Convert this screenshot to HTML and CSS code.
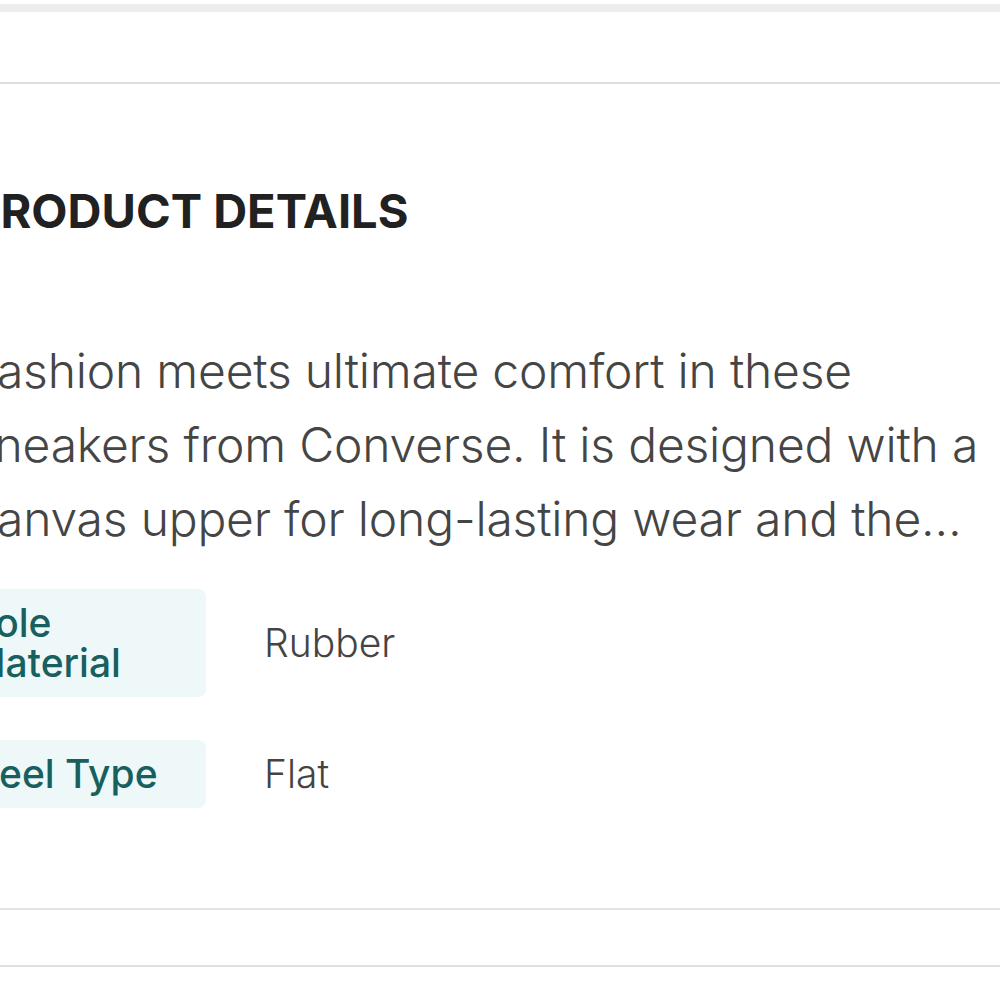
FILE: index.html
```html
<!DOCTYPE html>
<html lang="en">
<head>
<meta charset="utf-8">
<title>Product Details</title>
<link rel="stylesheet" href="styles.css">
</head>
<body>
<div class="page">
  <div class="top-band"></div>
  <div class="spacer-section"></div>
  <section class="details">
    <h2 class="details-title">PRODUCT DETAILS</h2>
    <p class="details-desc">Fashion meets ultimate comfort in these sneakers from Converse. It is designed with a canvas upper for long-lasting wear and the rubber sole provides durable traction.</p>
    <div class="spec-list">
      <div class="spec-row">
        <div class="spec-label">Sole<br>Material</div>
        <div class="spec-value">Rubber</div>
      </div>
      <div class="spec-row">
        <div class="spec-label">Heel Type</div>
        <div class="spec-value">Flat</div>
      </div>
    </div>
  </section>
  <div class="divider-section"></div>
</div>
</body>
</html>
```
FILE: styles.css
```css
html, body {
  margin: 0;
  padding: 0;
  background: #ffffff;
  overflow: hidden;
}
body {
  font-family: Inter, "Noto Sans", "Liberation Sans", sans-serif;
  color: #444;
}
.page {
  width: 1000px;
  overflow: hidden;
}
.top-band {
  height: 8px;
  margin-top: 4px;
  background: #ececec;
}
.spacer-section {
  height: 70px;
  border-bottom: 2px solid #dedede;
}
.details {
  margin-left: -30px;
  padding-right: 0;
  padding-top: 99px;
  padding-bottom: 100px;
  border-bottom: 2px solid #e3e3e3;
}
.details-title {
  margin: 0;
  font-size: 47px;
  line-height: 56px;
  font-weight: 650;
  color: #212121;
}
.details-desc {
  margin: 95px 0 0;
  font-size: 48px;
  line-height: 74px;
  font-weight: 300;
  letter-spacing: -0.2px;
  word-spacing: 0;
  color: #454545;
  display: -webkit-box;
  -webkit-line-clamp: 3;
  -webkit-box-orient: vertical;
  overflow: hidden;
}
.spec-list {
  margin-top: 33px;
  display: flex;
  flex-direction: column;
  gap: 43px;
}
.spec-row {
  display: flex;
  align-items: center;
  gap: 58px;
}
.spec-label {
  width: 236px;
  box-sizing: border-box;
  padding: 14px 8px 14px 0;
  background: #eef8f8;
  border-radius: 8px;
  color: #17605f;
  font-size: 39px;
  line-height: 40px;
  font-weight: 450;
}
.spec-value {
  font-size: 39px;
  line-height: 40px;
  font-weight: 300;
  color: #444;
}
.divider-section {
  height: 55px;
  border-bottom: 2px solid #e0e0e0;
}
```
